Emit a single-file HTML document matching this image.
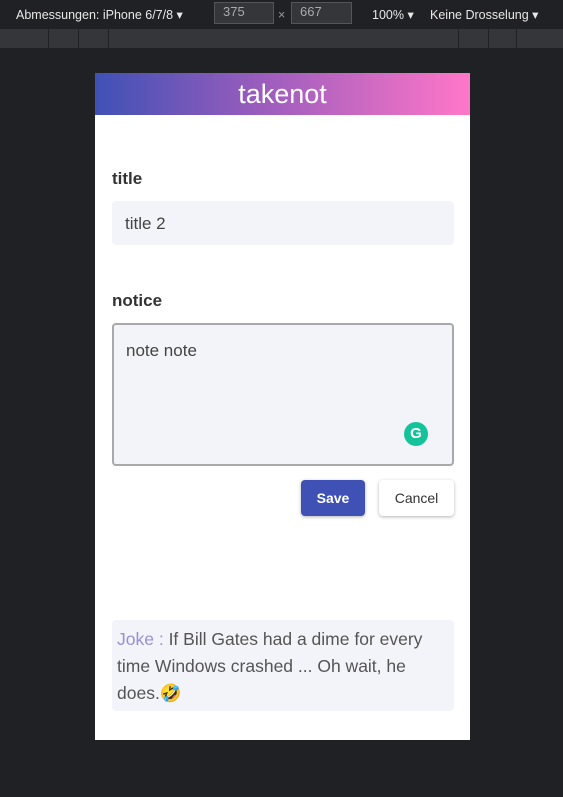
<!DOCTYPE html>
<html><head><meta charset="utf-8"><style>
*{box-sizing:border-box;margin:0;padding:0}
body{width:563px;height:797px;background:#202124;font-family:"Liberation Sans",sans-serif;position:relative;overflow:hidden}
.a{position:absolute}
.tb{left:0;top:0;width:563px;height:28px;background:#202124;color:#e8e8e8;font-size:12.5px}
.bar2{left:0;top:29px;width:563px;height:19px;background:#35363a}
.div{top:29px;width:1px;height:19px;background:#202124}
.box{border:1px solid #555;background:#35363a;color:#aaa;font-size:13px;height:22px;padding:1px 8px}
.page{left:95px;top:73px;width:375px;height:667px;background:#fff}
.hdr{left:95px;top:73px;width:375px;height:42px;background:linear-gradient(90deg,#3f51b5,#9c5dbd 45%,#ff77c8);color:#fff;font-size:27px;text-align:center;line-height:42px}
.lbl{font-weight:bold;font-size:17px;color:#333}
.inp{background:#f3f4f9;border-radius:4px;color:#444;font-size:17px}
</style></head><body>
<div class="a tb">
<span class="a" style="left:16px;top:7px">Abmessungen: iPhone 6/7/8 ▾</span>
<div class="a box" style="left:214px;top:2px;width:60px">375</div>
<span class="a" style="left:278px;top:8px;color:#999">×</span>
<div class="a box" style="left:291px;top:2px;width:61px">667</div>
<span class="a" style="left:372px;top:7px">100% ▾</span>
<span class="a" style="left:430px;top:7px">Keine Drosselung ▾</span>
</div>
<div class="a bar2"></div>
<div class="a div" style="left:48px"></div><div class="a div" style="left:78px"></div><div class="a div" style="left:108px"></div>
<div class="a div" style="left:458px"></div><div class="a div" style="left:488px"></div><div class="a div" style="left:516px"></div>
<div class="a page"></div>
<div class="a hdr">takenot</div>
<div class="a lbl" style="left:112px;top:169px">title</div>
<div class="a inp" style="left:112px;top:201px;width:342px;height:44px;padding:13px 13px">title 2</div>
<div class="a lbl" style="left:112px;top:291px">notice</div>
<div class="a inp" style="left:112px;top:323px;width:342px;height:143px;padding:16px 12px;border:2px solid #a9a9ab">note note</div>
<div class="a" style="left:404px;top:422px;width:24px;height:24px;border-radius:50%;background:#15c39a;color:#fff;font-weight:bold;font-size:15px;text-align:center;line-height:24px">G</div>
<div class="a" style="left:301px;top:480px;width:64px;height:36px;background:#3f51b5;border-radius:4px;color:#fff;font-weight:bold;font-size:14px;text-align:center;line-height:36px;box-shadow:0 1px 3px rgba(0,0,0,.3)">Save</div>
<div class="a" style="left:379px;top:480px;width:75px;height:36px;background:#fff;border-radius:4px;color:#333;font-size:14px;text-align:center;line-height:36px;box-shadow:0 1px 3px rgba(0,0,0,.3)">Cancel</div>
<div class="a inp" style="left:112px;top:620px;width:342px;height:91px;padding:6px 5px;font-size:17.5px;line-height:27px;color:#555"><span style="color:#9a8fd6">Joke : </span>If Bill Gates had a dime for every time Windows crashed ... Oh wait, he does.🤣</div>
</body></html>
